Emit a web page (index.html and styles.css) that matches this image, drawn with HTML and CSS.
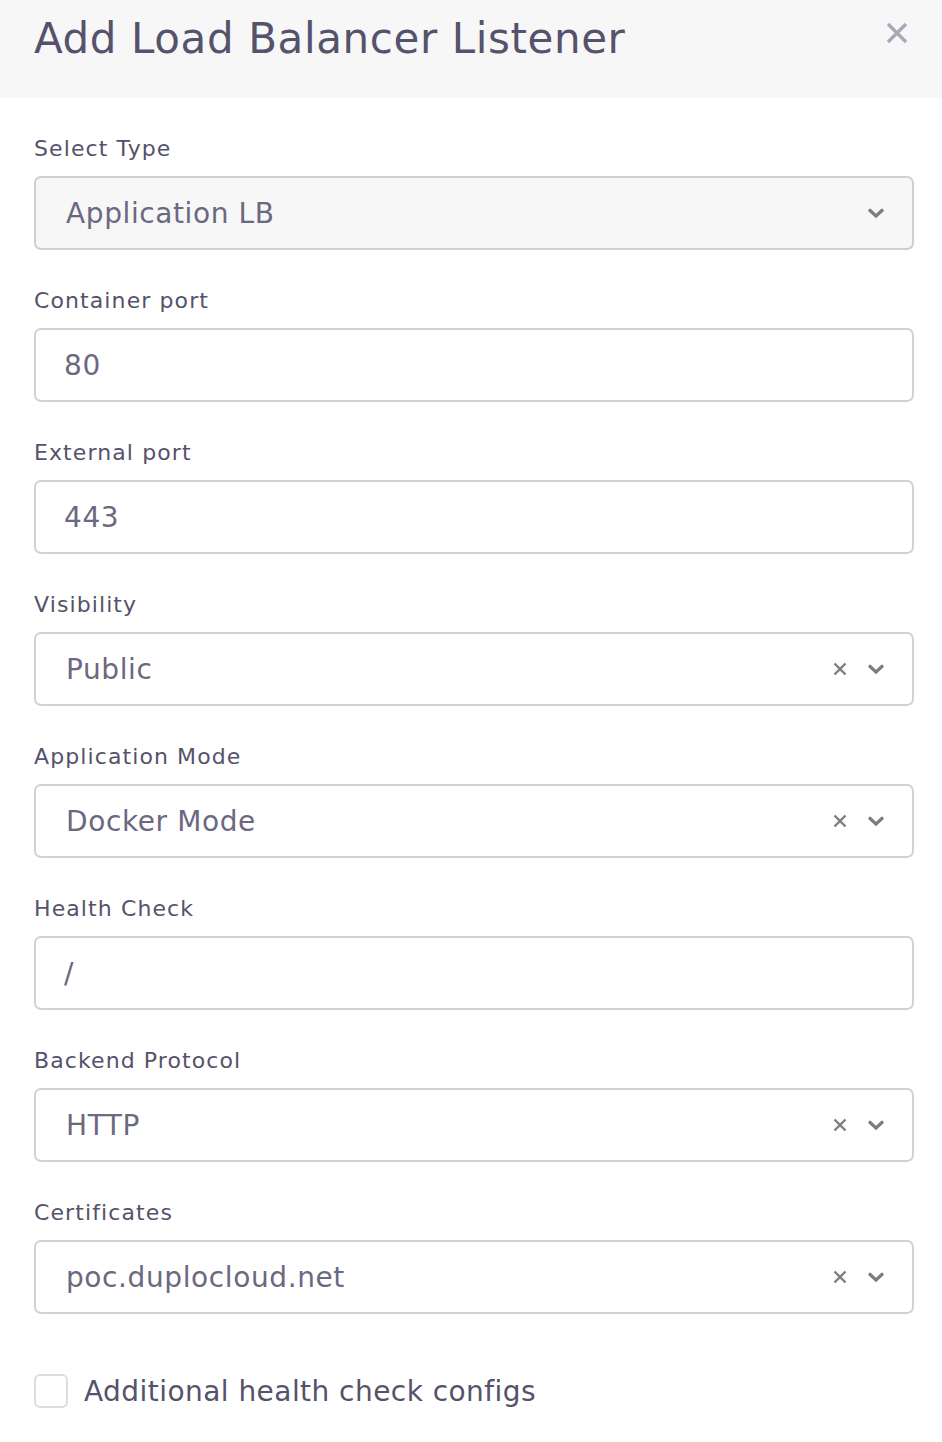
FILE: index.html
```html
<!DOCTYPE html>
<html>
<head>
<meta charset="utf-8">
<link rel="stylesheet" href="styles.css">
</head>
<body>
<div class="modal">
  <div class="header">
    <h1 class="title">Add Load Balancer Listener</h1>
    <button class="close" aria-label="Close">
      <svg width="22" height="22" viewBox="0 0 22 22"><path d="M2 2L20 20M20 2L2 20" stroke="#a9a8b6" stroke-width="3.2" stroke-linecap="butt"/></svg>
    </button>
  </div>
  <div class="body">
    <div class="field">
      <label class="label">Select Type</label>
      <div class="control select disabled">
        <span class="value">Application LB</span>
        <span class="icons"><svg class="chev" width="18" height="12" viewBox="0 0 18 12"><path d="M2 2.5L9 9L16 2.5" fill="none" stroke="#7d7d7d" stroke-width="3.2"/></svg></span>
      </div>
    </div>
    <div class="field">
      <label class="label">Container port</label>
      <div class="control input"><span class="value">80</span></div>
    </div>
    <div class="field">
      <label class="label">External port</label>
      <div class="control input"><span class="value">443</span></div>
    </div>
    <div class="field">
      <label class="label">Visibility</label>
      <div class="control select">
        <span class="value">Public</span>
        <span class="icons"><svg class="x" width="14" height="14" viewBox="0 0 14 14"><path d="M1.5 1.5L12.5 12.5M12.5 1.5L1.5 12.5" stroke="#7d7d7d" stroke-width="2.4"/></svg><svg class="chev" width="18" height="12" viewBox="0 0 18 12"><path d="M2 2.5L9 9L16 2.5" fill="none" stroke="#7d7d7d" stroke-width="3.2"/></svg></span>
      </div>
    </div>
    <div class="field">
      <label class="label">Application Mode</label>
      <div class="control select">
        <span class="value">Docker Mode</span>
        <span class="icons"><svg class="x" width="14" height="14" viewBox="0 0 14 14"><path d="M1.5 1.5L12.5 12.5M12.5 1.5L1.5 12.5" stroke="#7d7d7d" stroke-width="2.4"/></svg><svg class="chev" width="18" height="12" viewBox="0 0 18 12"><path d="M2 2.5L9 9L16 2.5" fill="none" stroke="#7d7d7d" stroke-width="3.2"/></svg></span>
      </div>
    </div>
    <div class="field">
      <label class="label">Health Check</label>
      <div class="control input"><span class="value">/</span></div>
    </div>
    <div class="field">
      <label class="label">Backend Protocol</label>
      <div class="control select">
        <span class="value">HTTP</span>
        <span class="icons"><svg class="x" width="14" height="14" viewBox="0 0 14 14"><path d="M1.5 1.5L12.5 12.5M12.5 1.5L1.5 12.5" stroke="#7d7d7d" stroke-width="2.4"/></svg><svg class="chev" width="18" height="12" viewBox="0 0 18 12"><path d="M2 2.5L9 9L16 2.5" fill="none" stroke="#7d7d7d" stroke-width="3.2"/></svg></span>
      </div>
    </div>
    <div class="field">
      <label class="label">Certificates</label>
      <div class="control select">
        <span class="value">poc.duplocloud.net</span>
        <span class="icons"><svg class="x" width="14" height="14" viewBox="0 0 14 14"><path d="M1.5 1.5L12.5 12.5M12.5 1.5L1.5 12.5" stroke="#7d7d7d" stroke-width="2.4"/></svg><svg class="chev" width="18" height="12" viewBox="0 0 18 12"><path d="M2 2.5L9 9L16 2.5" fill="none" stroke="#7d7d7d" stroke-width="3.2"/></svg></span>
      </div>
    </div>
    <div class="check-row">
      <span class="checkbox"></span>
      <span class="check-label">Additional health check configs</span>
    </div>
  </div>
</div>
</body>
</html>
```

FILE: styles.css
```css
html, body {
  margin: 0;
  padding: 0;
  background: #ffffff;
}
body {
  font-family: "DejaVu Sans", "Open Sans", sans-serif;
  color: #55526b;
}
.modal {
  width: 942px;
}
.header {
  background: #f7f7f8;
  height: 98px;
  display: flex;
  justify-content: space-between;
  align-items: flex-start;
  padding: 0 34px;
  box-sizing: border-box;
}
.title {
  margin: 10px 0 0 0;
  font-size: 42px;
  font-weight: normal;
  color: #55526b;
  line-height: 58px;
  letter-spacing: 0.6px;
}
.close {
  background: none;
  border: none;
  padding: 0;
  margin: 22px 0 0 0;
  width: 22px;
  height: 22px;
  display: flex;
}
.body {
  padding: 35px 28px 0 34px;
  display: flex;
  flex-direction: column;
}
.field {
  display: flex;
  flex-direction: column;
  margin-bottom: 35px;
}
.label {
  font-size: 22px;
  line-height: 32px;
  height: 43px;
  color: #55526b;
  letter-spacing: 1.1px;
}
.control {
  height: 74px;
  box-sizing: border-box;
  border: 2px solid #d2d2d6;
  border-radius: 7px;
  display: flex;
  align-items: center;
  background: #fff;
}
.control.disabled {
  background: #f7f7f7;
  border-color: #cfcfd2;
}
.input {
  padding-left: 28px;
}
.select {
  padding-left: 30px;
  padding-right: 27px;
  justify-content: space-between;
}
.value {
  font-size: 28px;
  color: #6b6880;
  letter-spacing: 0.6px;
}
.icons {
  display: flex;
  align-items: center;
  gap: 20px;
}
.check-row {
  display: flex;
  align-items: center;
  margin-top: 25px;
  gap: 16px;
}
.checkbox {
  width: 34px;
  height: 34px;
  box-sizing: border-box;
  border: 2px solid #dcdce2;
  border-radius: 6px;
  background: #fff;
}
.check-label {
  font-size: 28px;
  color: #55526b;
  letter-spacing: 0.45px;
}
```
